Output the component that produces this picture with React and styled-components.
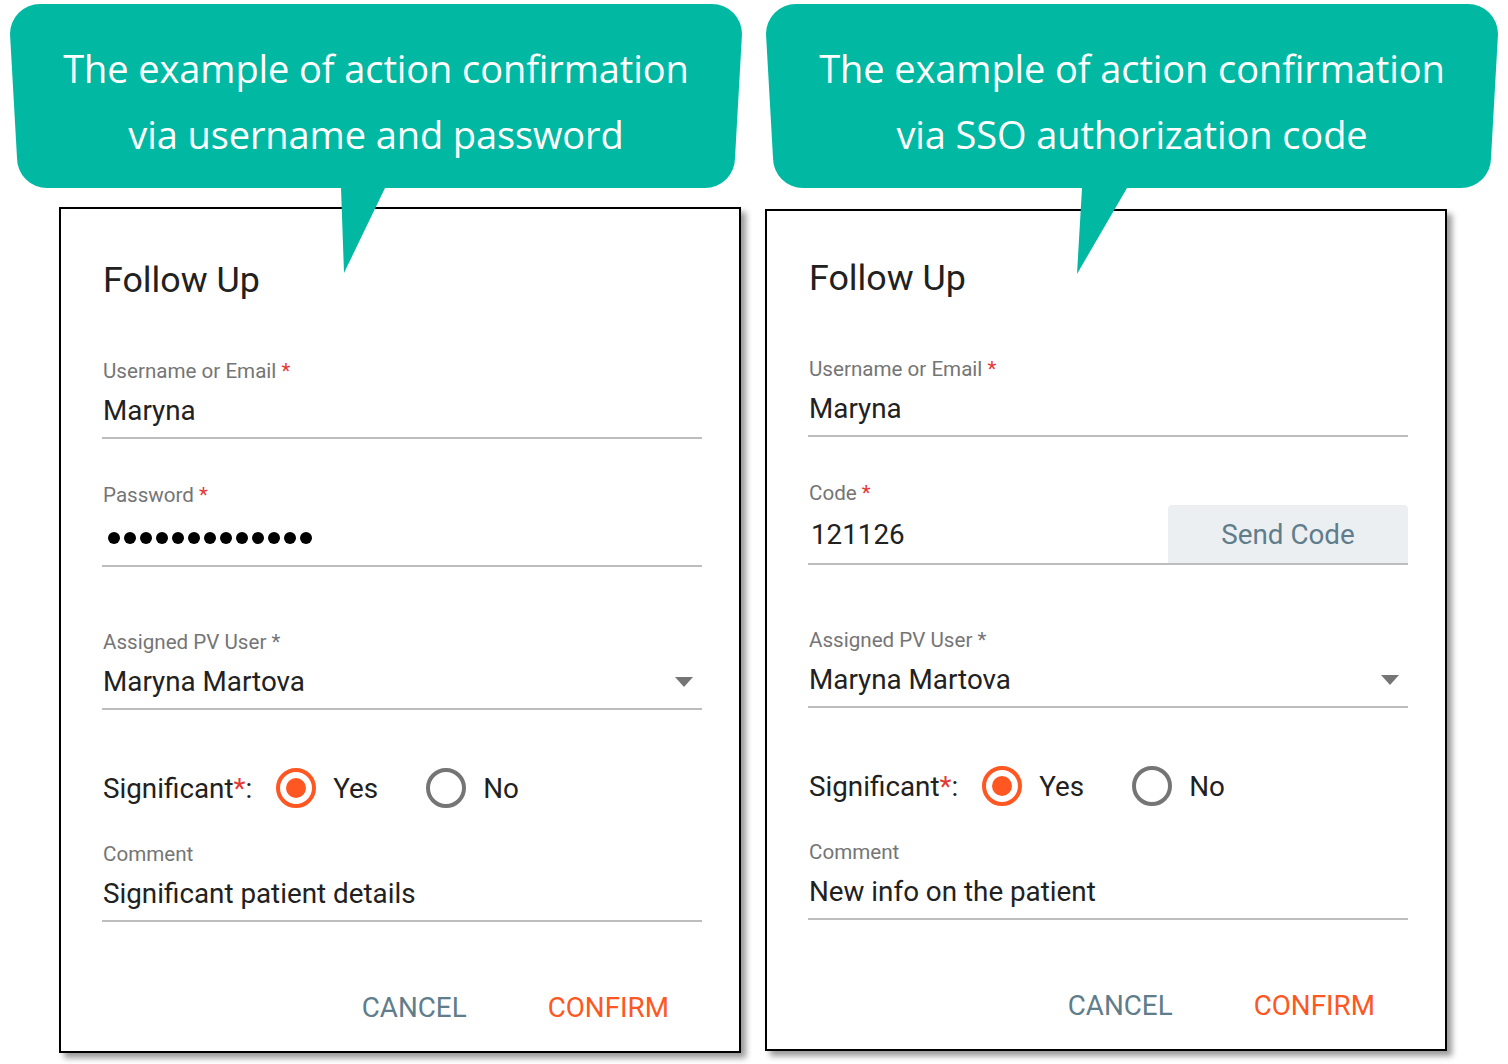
import React from "react";
import styled, { createGlobalStyle } from "styled-components";

const GlobalStyle = createGlobalStyle`
  html, body { margin: 0; padding: 0; background: #fff; }
  body { font-family: Roboto, "Liberation Sans", Arial, sans-serif; }
`;

const Page = styled.div`
  display: flex;
  gap: 24px;
  padding: 4px 0 0 10px;
  width: 1508px;
  height: 1064px;
  box-sizing: border-box;
  overflow: hidden;
`;

const Column = styled.div`
  display: flex;
  flex-direction: column;
  width: 732px;
  flex: none;
`;

const Callout = styled.div`
  position: relative;
  z-index: 2;
  height: 184px;
  box-sizing: border-box;
  padding-top: 31px;
`;

const Bubble = styled.svg`
  position: absolute;
  left: 0;
  top: 0;
  overflow: visible;
`;

const CalloutText = styled.p`
  position: relative;
  margin: 0;
  text-align: center;
  color: #fff;
  font-family: "Open Sans", "Noto Sans", sans-serif;
  font-size: 38px;
  line-height: 66px;
  letter-spacing: -0.1px;
`;

const Dialog = styled.section`
  position: relative;
  z-index: 1;
  width: 682px;
  box-sizing: border-box;
  margin-top: ${(p) => p.$top}px;
  margin-left: ${(p) => p.$left}px;
  border: 2px solid #000;
  background: #fff;
  box-shadow: 5px 5px 6px rgba(0, 0, 0, 0.4);
  padding: ${(p) => p.$padTop}px 37px 25px 41px;
  display: flex;
  flex-direction: column;
`;

const Title = styled.h2`
  margin: 0;
  font-size: 35.8px;
  font-weight: 400;
  line-height: 40px;
  color: #212121;
  padding-left: 1px;
`;

const Field = styled.div`
  margin-top: ${(p) => p.$gap}px;
  display: flex;
  flex-direction: column;
  border-bottom: 2px solid #bdbdbd;
`;

const Label = styled.div`
  font-size: 20.6px;
  line-height: 24px;
  color: #757575;
  padding-left: 1px;
`;

const Req = styled.span`
  color: ${(p) => (p.$red ? "#e53935" : "#757575")};
`;

const Value = styled.div`
  margin-top: 10px;
  padding-bottom: 8px;
  font-size: 27.8px;
  line-height: 36px;
  color: #212121;
  display: flex;
  align-items: center;
  justify-content: space-between;
  padding-left: 1px;
`;

const ValueRow = styled.div`
  height: 58px;
  display: flex;
  align-items: center;
  font-size: 27.8px;
  color: #212121;
`;

const CodeText = styled.span`
  flex: 1;
  padding-left: 3px;
`;

const SendCode = styled.button`
  align-self: stretch;
  width: 240px;
  border: none;
  border-radius: 4px 4px 0 0;
  background: #eceff1;
  color: #607d8b;
  font-family: Roboto, sans-serif;
  font-size: 27.8px;
  padding: 0;
`;

const Dots = styled.div`
  display: flex;
  gap: 4px;
  margin: 3px 0 0 6px;
`;

const Dot = styled.span`
  width: 12px;
  height: 12px;
  border-radius: 50%;
  background: #000;
`;

const Caret = styled.span`
  width: 0;
  height: 0;
  border-left: 9px solid transparent;
  border-right: 9px solid transparent;
  border-top: 10px solid #757575;
  margin-right: 9px;
`;

const RadioRow = styled.div`
  margin-top: 58px;
  height: 40px;
  display: flex;
  align-items: center;
  font-size: 27.8px;
  color: #212121;
  padding-left: 1px;
`;

const RadioGroup = styled.div`
  display: flex;
  align-items: center;
  gap: 48px;
  margin-left: 24px;
`;

const RadioOption = styled.label`
  display: flex;
  align-items: center;
  gap: 17px;
`;

const RadioCircle = styled.span`
  width: 40px;
  height: 40px;
  box-sizing: border-box;
  border-radius: 50%;
  border: 4px solid ${(p) => (p.$checked ? "#ff5722" : "#757575")};
  display: flex;
  align-items: center;
  justify-content: center;
  &::after {
    content: "";
    width: 20px;
    height: 20px;
    border-radius: 50%;
    background: ${(p) => (p.$checked ? "#ff5722" : "transparent")};
  }
`;

const Actions = styled.div`
  margin-top: 68px;
  display: flex;
  justify-content: flex-end;
  gap: 81px;
  padding-right: 33px;
`;

const ActionButton = styled.button`
  border: none;
  background: none;
  padding: 0;
  font-family: Roboto, sans-serif;
  font-size: 27.8px;
  line-height: 36px;
  text-transform: uppercase;
  color: ${(p) => p.$color};
`;

function bubblePath(w, h, inset, r, t) {
  return [
    `M ${r} 0`,
    `L ${w - r} 0`,
    `A ${r} ${r} 0 0 1 ${w} ${r}`,
    `L ${w - inset} ${h - r}`,
    `A ${r} ${r} 0 0 1 ${w - inset - r} ${h}`,
    `L ${t.x2} ${h}`,
    `L ${t.px} ${t.py}`,
    `L ${t.x1} ${h}`,
    `L ${inset + r} ${h}`,
    `A ${r} ${r} 0 0 1 ${inset} ${h - r}`,
    `L 0 ${r}`,
    `A ${r} ${r} 0 0 1 ${r} 0`,
    "Z",
  ].join(" ");
}

function SpeechCallout({ lines, tail }) {
  return (
    <Callout>
      <Bubble width="732" height="280" viewBox="0 0 732 280">
        <path d={bubblePath(732, 184, 7, 30, tail)} fill="#01B9A3" />
      </Bubble>
      <CalloutText>
        {lines[0]}
        <br />
        {lines[1]}
      </CalloutText>
    </Callout>
  );
}

function RadioField() {
  return (
    <RadioRow>
      <span>
        Significant<Req $red>*</Req>:
      </span>
      <RadioGroup>
        <RadioOption>
          <RadioCircle $checked />
          Yes
        </RadioOption>
        <RadioOption>
          <RadioCircle />
          No
        </RadioOption>
      </RadioGroup>
    </RadioRow>
  );
}

function CommonBottom({ comment }) {
  return (
    <>
      <Field $gap={63}>
        <Label>
          Assigned PV User <Req>*</Req>
        </Label>
        <Value>
          <span>Maryna Martova</span>
          <Caret />
        </Value>
      </Field>
      <RadioField />
      <Field $gap={34}>
        <Label>Comment</Label>
        <Value>{comment}</Value>
      </Field>
      <Actions>
        <ActionButton $color="#607d8b">Cancel</ActionButton>
        <ActionButton $color="#ff5722">Confirm</ActionButton>
      </Actions>
    </>
  );
}

export default function App() {
  return (
    <>
      <GlobalStyle />
      <Page>
        <Column>
          <SpeechCallout
            lines={["The example of action confirmation", "via username and password"]}
            tail={{ x1: 331, x2: 375, px: 334, py: 269 }}
          />
          <Dialog $top={19} $left={49} $padTop={51}>
            <Title>Follow Up</Title>
            <Field $gap={59}>
              <Label>
                Username or Email <Req $red>*</Req>
              </Label>
              <Value>Maryna</Value>
            </Field>
            <Field $gap={44}>
              <Label>
                Password <Req $red>*</Req>
              </Label>
              <ValueRow>
                <Dots>
                  {Array.from({ length: 13 }).map((_, i) => (
                    <Dot key={i} />
                  ))}
                </Dots>
              </ValueRow>
            </Field>
            <CommonBottom comment="Significant patient details" />
          </Dialog>
        </Column>
        <Column>
          <SpeechCallout
            lines={["The example of action confirmation", "via SSO authorization code"]}
            tail={{ x1: 316, x2: 361, px: 311, py: 270 }}
          />
          <Dialog $top={21} $left={-1} $padTop={47}>
            <Title>Follow Up</Title>
            <Field $gap={59}>
              <Label>
                Username or Email <Req $red>*</Req>
              </Label>
              <Value>Maryna</Value>
            </Field>
            <Field $gap={44}>
              <Label>
                Code <Req $red>*</Req>
              </Label>
              <ValueRow>
                <CodeText>121126</CodeText>
                <SendCode>Send Code</SendCode>
              </ValueRow>
            </Field>
            <CommonBottom comment="New info on the patient" />
          </Dialog>
        </Column>
      </Page>
    </>
  );
}
